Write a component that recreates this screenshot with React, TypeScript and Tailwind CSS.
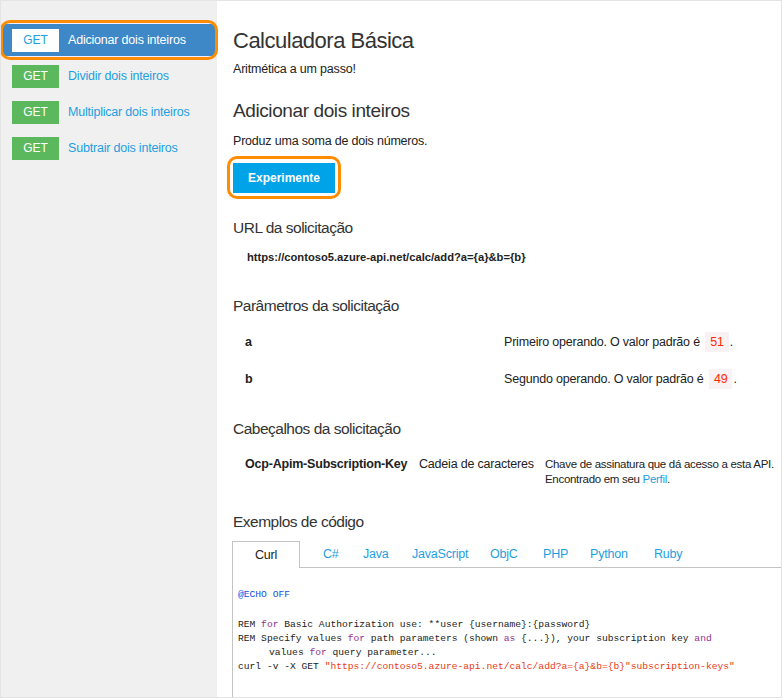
import React from "react";

const Code = ({ children }: { children: React.ReactNode }) => (
  <div className="h-[14px] leading-[14px] whitespace-pre">{children}</div>
);

export default function App() {
  const items = [
    { label: "Adicionar dois inteiros", active: true },
    { label: "Dividir dois inteiros", active: false },
    { label: "Multiplicar dois inteiros", active: false },
    { label: "Subtrair dois inteiros", active: false },
  ];
  const tabs: [string, string][] = [
    ["C#", "w-[40px]"],
    ["Java", "w-[49px]"],
    ["JavaScript", "w-[78px]"],
    ["ObjC", "w-[53px]"],
    ["PHP", "w-[47px]"],
    ["Python", "w-[64px]"],
    ["Ruby", "w-[50px]"],
  ];
  return (
    <div className="w-[783px] h-[700px] bg-white font-['Liberation_Sans',Arial,sans-serif] text-[#222]">
      <div className="flex w-[782px] h-[698px] border border-[#e4e4e4] overflow-hidden">
        <aside className="w-[216px] shrink-0 bg-[#f0f0f0] pt-[23px] flex flex-col gap-[4px]">
          {items.map((it) => (
            <div
              key={it.label}
              className={
                "relative ml-[2px] w-[212px] h-[32px] flex items-center " +
                (it.active ? "bg-[#3f88c8]" : "")
              }
            >
              {it.active && (
                <div className="absolute -left-[3px] -right-[3px] -top-[4px] -bottom-[4px] border-[3px] border-[#ff8c00] rounded-[10px]" />
              )}
              <span
                className={
                  "ml-[9px] w-[47px] h-[23px] flex items-center justify-center text-[12px] " +
                  (it.active ? "bg-white text-[#1e9fe0]" : "bg-[#5cb85c] text-white")
                }
              >
                GET
              </span>
              <span
                className={
                  "ml-[9px] text-[12.5px] tracking-[-0.2px] " + (it.active ? "text-white" : "text-[#1e9fe0]")
                }
              >
                {it.label}
              </span>
            </div>
          ))}
        </aside>
        <main className="flex-1 pl-[16px] pt-[24px] flex flex-col text-[12.5px] tracking-[-0.2px]">
          <h1 className="h-[32px] leading-[32px] text-[22px] tracking-[-0.5px] text-[#333]">Calculadora Básica</h1>
          <p className="mt-[2px] h-[20px] leading-[20px]">Aritmética a um passo!</p>
          <h2 className="mt-[18px] h-[28px] leading-[28px] text-[19px] tracking-[-0.4px] text-[#333]">Adicionar dois inteiros</h2>
          <p className="mt-[6px] h-[20px] leading-[20px]">Produz uma soma de dois números.</p>
          <div className="mt-[12px] relative w-[102px] h-[30px] bg-[#00a2e8] flex items-center justify-center">
            <div className="absolute -left-[6px] -right-[6px] -top-[7px] -bottom-[6px] border-[3px] border-[#ff8c00] rounded-[10px]" />
            <span className="text-white text-[12px] tracking-normal font-bold">Experimente</span>
          </div>
          <h3 className="mt-[22px] h-[26px] leading-[26px] text-[15.5px] tracking-[-0.5px] text-[#333]">URL da solicitação</h3>
          <p className="mt-[6px] h-[20px] leading-[20px] pl-[14px] text-[11.2px] tracking-normal font-bold">
            https://contoso5.azure-api.net/calc/add?a={"{a}"}&amp;b={"{b}"}
          </p>
          <h3 className="mt-[26px] h-[26px] leading-[26px] text-[15.5px] tracking-[-0.5px] text-[#333]">Parâmetros da solicitação</h3>
          <div className="mt-[5px] flex flex-col">
            <div className="h-[37px] flex items-center">
              <span className="pl-[12px] w-[271px] font-bold">a</span>
              <span>
                Primeiro operando. O valor padrão é{" "}
                <span className="ml-[2px] mr-[1px] bg-[#f9f2f4] text-[#ff2a00] px-[5px] py-[3px]">51</span>.
              </span>
            </div>
            <div className="h-[37px] flex items-center">
              <span className="pl-[12px] w-[271px] font-bold">b</span>
              <span>
                Segundo operando. O valor padrão é{" "}
                <span className="ml-[2px] mr-[1px] bg-[#f9f2f4] text-[#ff2a00] px-[5px] py-[3px]">49</span>.
              </span>
            </div>
          </div>
          <h3 className="mt-[18px] h-[26px] leading-[26px] text-[15.5px] tracking-[-0.5px] text-[#333]">Cabeçalhos da solicitação</h3>
          <div className="mt-[15px] flex leading-[15px] whitespace-nowrap">
            <span className="pl-[12px] w-[186px] font-bold">Ocp-Apim-Subscription-Key</span>
            <span className="w-[126px]">Cadeia de caracteres</span>
            <span className="flex-1 text-[11.5px] tracking-[-0.3px]">
              Chave de assinatura que dá acesso a esta API.
              <br />
              Encontrado em seu <span className="text-[#1e9fe0]">Perfil</span>.
            </span>
          </div>
          <h3 className="mt-[22px] h-[26px] leading-[26px] text-[15.5px] tracking-[-0.5px] text-[#333]">Exemplos de código</h3>
          <div className="mt-[6px] -ml-[1px] flex h-[27px]">
            <div className="w-[68px] h-[27px] border border-b-0 border-[#c4c4c4] flex items-center justify-center">
              Curl
            </div>
            <div className="flex-1 border-b border-[#c4c4c4] flex items-center">
              <span className="w-[23px]" />
              {tabs.map(([t, w]) => (
                <span key={t} className={w + " text-[#1e9fe0]"}>
                  {t}
                </span>
              ))}
            </div>
          </div>
          <div className="-ml-[1px] flex-1 border-l border-[#c4c4c4] pl-[5px] pt-[20px] font-['Liberation_Mono',monospace] text-[9.65px] tracking-normal text-[#222]">
            <Code>
              <span className="text-[#1250e0]">@ECHO OFF</span>
            </Code>
            <div className="h-[16px]" />
            <Code>
              REM <span className="text-[#90308f]">for</span> Basic Authorization use: **user {"{username}"}:{"{password}"}
            </Code>
            <Code>
              REM Specify values <span className="text-[#90308f]">for</span> path parameters (shown{" "}
              <span className="text-[#90308f]">as</span> {"{...}"}), your subscription key{" "}
              <span className="text-[#90308f]">and</span>
            </Code>
            <Code>
              <span className="pl-[31px]">
                values <span className="text-[#90308f]">for</span> query parameter...
              </span>
            </Code>
            <Code>
              curl -v -X GET{" "}
              <span className="text-[#ea3a12]">
                "https://contoso5.azure-api.net/calc/add?a={"{a}"}&amp;b={"{b}"}"subscription-keys"
              </span>
            </Code>
          </div>
        </main>
      </div>
    </div>
  );
}
